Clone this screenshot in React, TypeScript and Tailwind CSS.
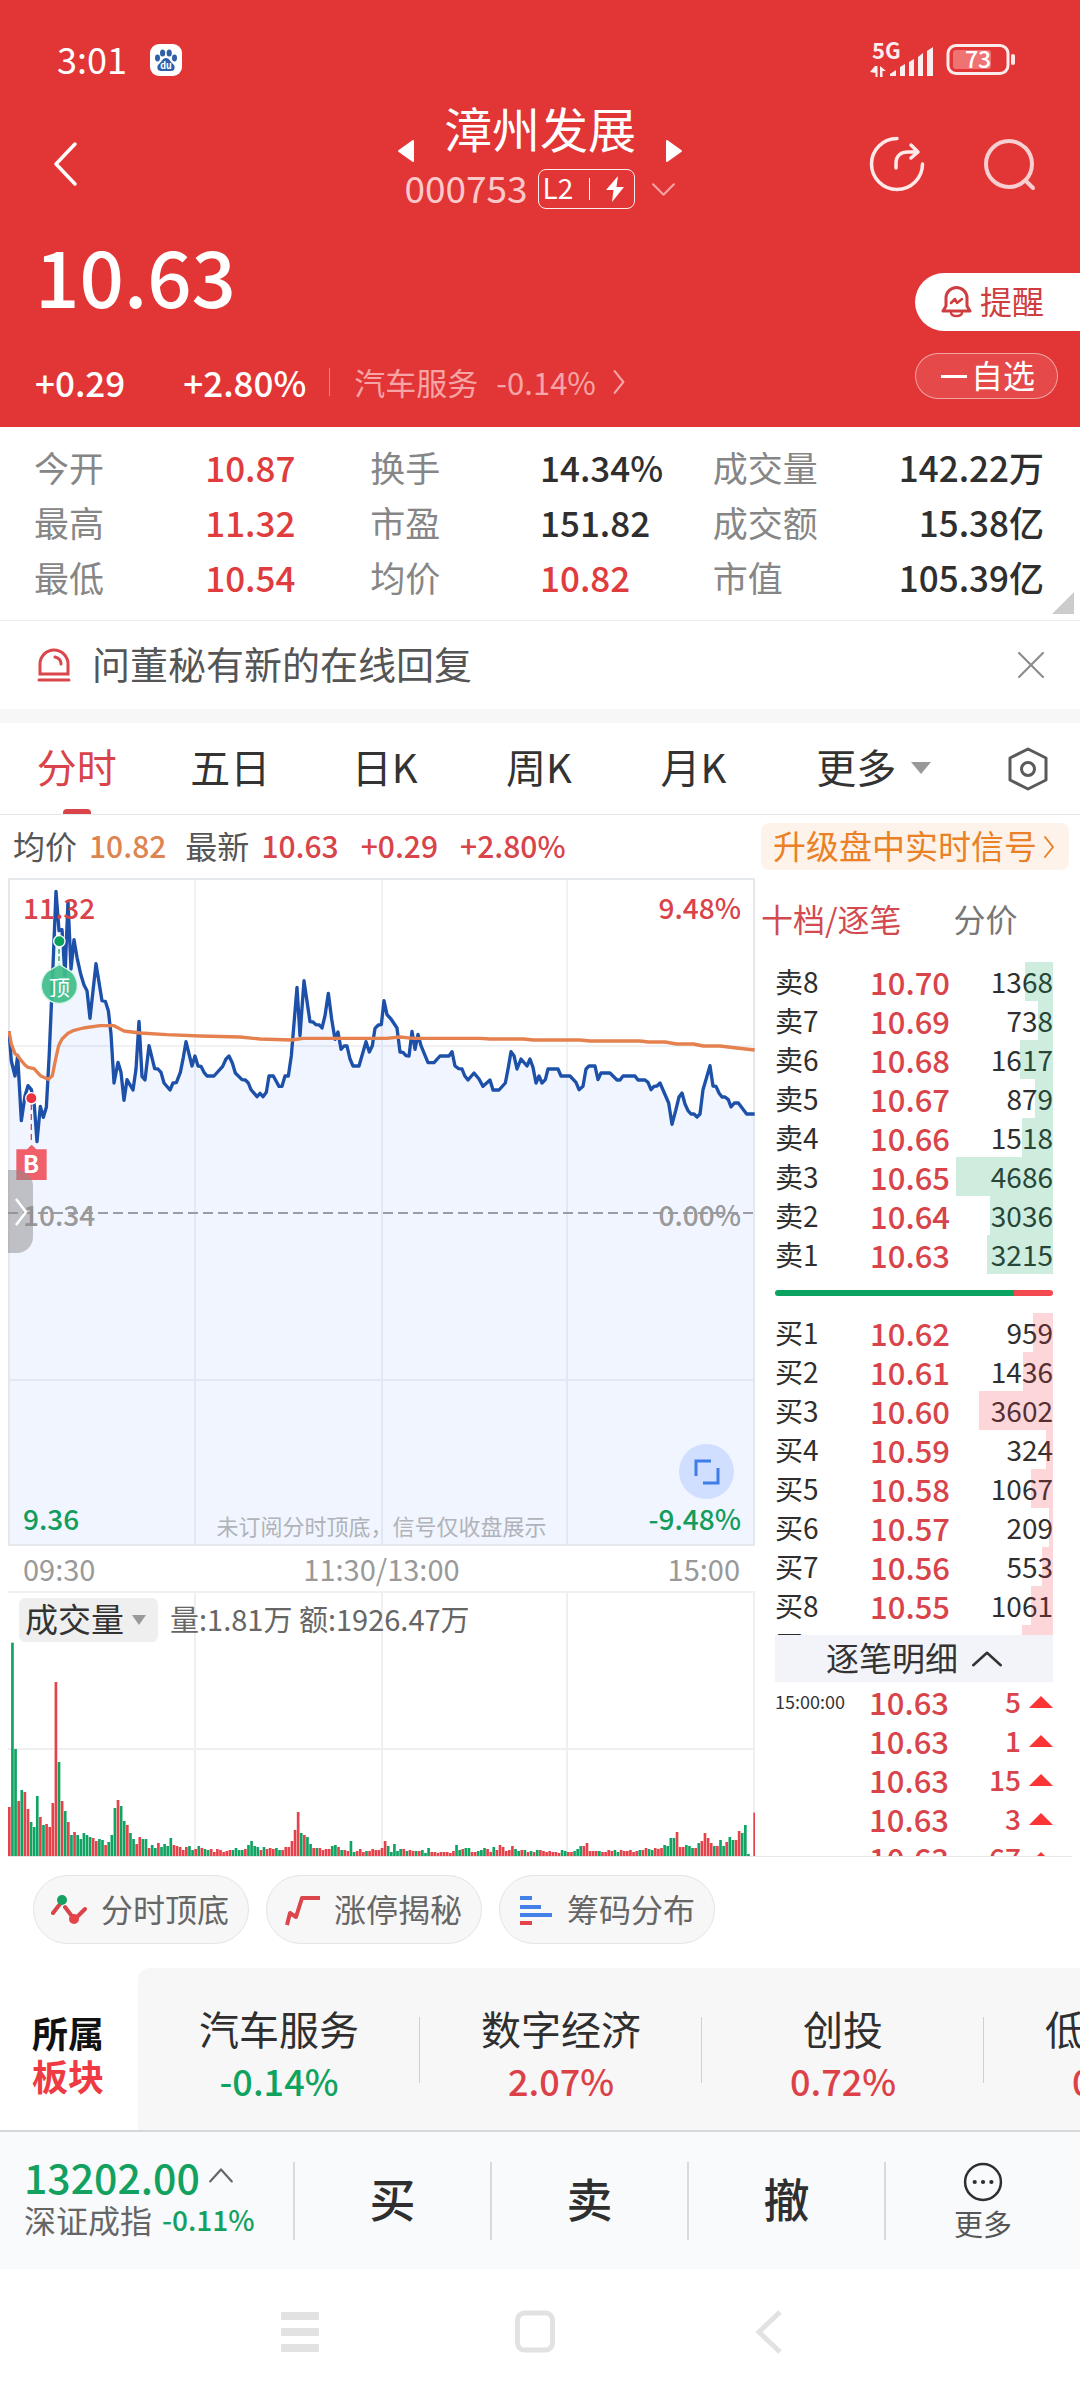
import { useState } from "react";

const stats = [
  ["今开", "10.87", "换手", "14.34%", "成交量", "142.22万"],
  ["最高", "11.32", "市盈", "151.82", "成交额", "15.38亿"],
  ["最低", "10.54", "均价", "10.82", "市值", "105.39亿"],
];

const tabs = ["分时", "五日", "日K", "周K", "月K"];

const sells = [
  { label: "卖8", price: "10.70", qty: 1368 },
  { label: "卖7", price: "10.69", qty: 738 },
  { label: "卖6", price: "10.68", qty: 1617 },
  { label: "卖5", price: "10.67", qty: 879 },
  { label: "卖4", price: "10.66", qty: 1518 },
  { label: "卖3", price: "10.65", qty: 4686 },
  { label: "卖2", price: "10.64", qty: 3036 },
  { label: "卖1", price: "10.63", qty: 3215 },
];

const buys = [
  { label: "买1", price: "10.62", qty: 959 },
  { label: "买2", price: "10.61", qty: 1436 },
  { label: "买3", price: "10.60", qty: 3602 },
  { label: "买4", price: "10.59", qty: 324 },
  { label: "买5", price: "10.58", qty: 1067 },
  { label: "买6", price: "10.57", qty: 209 },
  { label: "买7", price: "10.56", qty: 553 },
  { label: "买8", price: "10.55", qty: 1061 },
  { label: "买9", price: "10.54", qty: 1477 },
];

const ticks = [
  { time: "15:00:00", price: "10.63", qty: 5 },
  { time: "", price: "10.63", qty: 1 },
  { time: "", price: "10.63", qty: 15 },
  { time: "", price: "10.63", qty: 3 },
  { time: "", price: "10.63", qty: 67 },
];

const sectors = [
  { name: "汽车服务", change: "-0.14%" },
  { name: "数字经济", change: "2.07%" },
  { name: "创投", change: "0.72%" },
  { name: "低空经济", change: "0.55%" },
];

const pricePoints =
  "27,517 34,606 45,651 53,590 64,785 75,710 84,680 94,692 103,740 111,848 121,742 130,775 139,745 148,580 157,370 168,97 177,215 186,212 195,350 204,128 213,330 222,242 231,295 242,345 252,378 261,395 270,478 288,314 306,425 316,427 325,455 333,525 342,672 354,610 363,640 372,724 381,662 399,693 408,630 417,487 426,652 435,663 447,560 464,629 474,630 483,640 492,672 510,693 519,672 529,671 541,640 550,595 558,548 576,621 585,591 594,621 603,622 612,640 621,651 642,651 668,622 678,600 687,591 697,612 706,642 726,662 736,663 745,672 753,692 771,713 780,703 789,713 799,700 807,651 820,651 837,682 846,682 855,651 865,651 874,590 891,385 900,530 912,365 930,488 939,489 948,497 958,498 966,507 975,470 985,403 995,480 1005,541 1014,519 1023,571 1032,561 1041,561 1050,600 1059,621 1077,621 1098,548 1108,579 1117,560 1125,508 1135,498 1144,497 1152,425 1161,467 1173,480 1191,507 1200,579 1209,580 1218,590 1227,591 1236,517 1245,571 1254,526 1263,560 1284,611 1302,611 1320,591 1347,591 1356,578 1365,621 1376,629 1386,630 1394,650 1404,663 1422,642 1437,660 1449,682 1470,663 1479,693 1497,693 1516,672 1525,625 1533,578 1542,590 1551,630 1563,600 1581,621 1590,600 1599,625 1608,672 1617,651 1626,672 1636,662 1644,630 1674,630 1683,651 1710,651 1728,670 1737,692 1749,682 1758,630 1767,621 1785,621 1794,662 1803,642 1830,642 1851,663 1860,663 1869,651 1905,651 1914,663 1935,663 1944,670 1953,692 1962,682 1971,681 1980,672 2006,732 2016,796 2027,755 2037,714 2046,702 2055,735 2064,755 2073,765 2082,765 2091,774 2100,765 2109,692 2130,620 2139,681 2148,682 2157,702 2166,714 2175,714 2185,722 2193,744 2203,732 2215,732 2240,765 2264,765";

const averagePoints =
  "27,517 34,555 45,584 53,590 64,605 75,618 84,625 102,629 121,650 145,661 157,650 167,600 176,560 186,540 204,523 222,514 250,507 300,500 342,500 372,516 420,522 500,527 600,531 720,534 780,540 875,543 910,538 1160,538 1200,534 1240,538 1440,538 1470,540 1570,540 1600,543 1740,543 1770,546 1920,546 1945,549 1995,549 2030,555 2080,555 2110,561 2160,561 2210,567 2264,573";

// one entry per minute: r = up, g = down, followed by the bar height
const volumes =
  "r147 g640 g321 r165 g198 r192 r141 g102 g87 g180 r117 g93 r96 r87 r159 r522 g282 r165 g135 r102 g63 r72 g63 g51 g69 g63 g57 r54 r45 g51 g48 r33 g42 g63 g144 r168 g150 g105 r93 g69 g51 r36 r57 g51 g51 r24 g33 g24 r39 g27 g36 g30 g54 r33 r30 r27 r18 r27 g30 g18 r21 g30 r24 g21 g18 r21 r12 r21 r18 r12 r15 r18 g18 g24 g18 g18 r21 g33 g45 g30 g27 r18 g27 r21 r24 r21 g24 g18 r18 r27 r27 r45 r78 r132 g69 r63 g57 g36 r24 g24 r24 r18 r21 r21 g30 g33 r27 g18 r18 r15 g45 g12 r15 r21 r12 g15 r15 r21 r18 r18 r24 r45 g30 g12 g36 g15 g21 r21 g15 r18 r15 g15 r15 g18 g9 g24 r12 r12 r9 r12 r12 r12 r9 r15 g33 g18 r21 g24 g24 r12 r12 g15 g18 g24 r21 r12 g27 r18 r33 r27 r15 r18 r30 g21 g15 r18 g18 r12 g15 r12 g18 r18 r15 r12 r15 r12 r12 r9 g18 g15 r12 r12 g15 g21 g30 r30 r39 r15 r15 r15 g15 r12 r12 r18 r15 g18 g12 r18 r15 r15 r18 r12 r15 g18 r18 r24 g21 g18 r24 r21 r24 g33 g30 g54 g54 r72 r27 r27 g33 g30 g24 r24 g39 r45 r69 r54 r39 g30 r30 g48 g30 r42 g57 g48 r48 r75 g69 g93 g6 g0 r130"
    .split(" ")
    .map((v) => ({ up: v[0] === "r", h: Number(v.slice(1)) }));

function Chevron({ d, className }: { d: string; className: string }) {
  return (
    <svg viewBox="0 0 24 24" className={className} fill="none" stroke="currentColor" strokeWidth="2">
      <path d={d} strokeLinecap="round" strokeLinejoin="round" />
    </svg>
  );
}

function StatusBar() {
  return (
    <div className="flex h-[104px] items-center justify-between pt-9 pb-5 pl-[57px] pr-16">
      <div className="flex items-center gap-[23px]">
        <span className="pb-1 text-[36px] leading-[40px]">3:01</span>
        <svg viewBox="0 0 32 32" className="size-8">
          <rect width="32" height="32" rx="9" fill="#fff" />
          <g fill="#2f5fa8">
            <ellipse cx="7.5" cy="14" rx="2.5" ry="3.4" />
            <ellipse cx="12.6" cy="9" rx="2.6" ry="3.6" />
            <ellipse cx="19.2" cy="9" rx="2.6" ry="3.6" />
            <ellipse cx="24.5" cy="14" rx="2.5" ry="3.4" />
            <path d="M16 14c3 0 4 3 6 5s3 3 2.500 5.500c-.5 2.500-3 2.500-4.500 2.500h-8c-1.500 0-4 0-4.500-2.500C7 22 8 21 10 19s3-5 6-5z" />
          </g>
          <text x="16" y="25" textAnchor="middle" fontSize="9" fontWeight="700" fill="#fff">
            du
          </text>
        </svg>
      </div>
      <div className="flex items-center gap-3">
        <svg viewBox="0 0 64 34" className="h-[34px] w-16 overflow-visible" fill="#fff" fillOpacity=".92">
          <text x="2" y="16" fontSize="22" fontWeight="700">
            5G
          </text>
          <path d="M5 23h2.500v11H5.500v-4L0 29zM10 23l6 5h-3.500v6H10z" />
          <path d="M20 31l6-4v6h-6zM30 24l5-3v12h-5zM39 19l5-3v17h-5zM48 14l5-4v23h-5zM57 8l6-4v29h-6z" />
        </svg>
        <svg viewBox="0 0 70 32" className="h-8 w-[70px] overflow-visible">
          <rect x="2" y="1.500" width="60" height="28" rx="8" fill="none" stroke="#fff" strokeOpacity=".9" strokeWidth="3" />
          <rect x="7" y="6" width="38" height="19" rx="3" fill="#f07374" />
          <rect x="65" y="10" width="4" height="11" rx="2" fill="#fff" fillOpacity=".9" />
          <text x="32" y="24" textAnchor="middle" fontSize="23" fontWeight="500" fill="#fff">
            73
          </text>
        </svg>
      </div>
    </div>
  );
}

function Header() {
  return (
    <header className="bg-[#e23536] text-white">
      <StatusBar />
      <div className="grid h-[120px] grid-cols-[1fr_auto_1fr] items-center">
        <button aria-label="返回" className="ml-[50px] w-8">
          <svg viewBox="0 0 32 46" className="h-[46px] w-8" fill="none" stroke="currentColor" strokeWidth="3.500">
            <path d="M25 3L6 23l19 20" strokeLinecap="round" strokeLinejoin="round" />
          </svg>
        </button>
        <div className="flex flex-col items-center self-start">
          <div className="flex h-[58px] items-end gap-[30px]">
            <button aria-label="上一只">
              <svg viewBox="0 0 16 22" className="h-[22px] w-4" fill="currentColor" stroke="currentColor" strokeWidth="2" strokeLinejoin="round">
                <path d="M15 1v20L1 11z" />
              </svg>
            </button>
            <h1 className="pb-2 text-[48px] leading-[54px]">漳州发展</h1>
            <button aria-label="下一只">
              <svg viewBox="0 0 16 22" className="h-[22px] w-4" fill="currentColor" stroke="currentColor" strokeWidth="2" strokeLinejoin="round">
                <path d="M1 1v20l14-10z" />
              </svg>
            </button>
          </div>
          <div className="mt-[7px] flex h-10 items-center">
            <span className="mb-1 text-[37px] leading-[40px] text-[#fcc9ca]">000753</span>
            <span className="ml-[10px] flex h-10 w-[97px] items-center rounded-lg border border-white/90 pl-1">
              <span className="mb-1 text-[28px] leading-[36px]">L2</span>
              <span className="ml-4 h-[22px] w-px bg-white" />
              <svg viewBox="0 0 18 26" className="ml-4 h-[26px] w-[18px]" fill="currentColor">
                <path d="M12 0L0 14h7.500L6 26l12-15h-7.500z" />
              </svg>
            </span>
            <Chevron d="M2 7l10 10L22 7" className="ml-4 size-[25px] text-[#f7a3a4]" />
          </div>
        </div>
        <div className="flex justify-end gap-[58px] pr-[43px]">
          <button aria-label="分享">
            <svg viewBox="0 0 56 56" className="size-14" fill="none" stroke="#ffeaea" strokeWidth="3.500" strokeLinecap="round" strokeLinejoin="round">
              <path d="M28 2.500A25.500 25.500 0 1 0 53.500 28" />
              <path d="M27 32v-5c0-7 5-11 12-11h9M42 9l7 7-7 6" />
            </svg>
          </button>
          <button aria-label="搜索">
            <svg viewBox="0 0 54 56" className="h-14 w-[54px]" fill="none" stroke="#f7cfd0" strokeWidth="4" strokeLinecap="round">
              <circle cx="26" cy="28" r="23" />
              <path d="M43 45l7 7" />
            </svg>
          </button>
        </div>
      </div>
      <div className="flex h-[203px] justify-between">
        <div className="pt-2 pl-[35px]">
          <div className="text-[78px] leading-[84px] font-medium">10.63</div>
          <div className="mt-[46px] flex items-center text-[35px] leading-[40px] font-medium">
            <span>+0.29</span>
            <span className="ml-[58px]">+2.80%</span>
            <span className="ml-[23px] h-7 w-px bg-white/40" />
            <a href="#sector" className="ml-6 flex items-center text-[31px] font-normal text-[#f6a4a5]">
              汽车服务
              <span className="ml-[18px]">-0.14%</span>
              <Chevron d="M8 2l8 10-8 10" className="ml-[10px] size-[26px]" />
            </a>
          </div>
        </div>
        <div className="flex flex-col items-end pt-[49px]">
          <button className="flex h-[58px] w-[165px] items-center rounded-l-full bg-white pl-[26px] text-[32px] text-[#cf3d41]">
            <svg viewBox="0 0 31 32" className="mr-2 h-8 w-[31px]" fill="none" stroke="currentColor" strokeWidth="3" strokeLinejoin="round" strokeLinecap="round">
              <path d="M2 25h27l-3-5v-8a10.500 10.500 0 0 0-21 0v8z" />
              <path d="M10 27c1 4 10 4 11 0M10 17l4-4 2 4 5-4" strokeWidth="2.500" />
            </svg>
            <span className="pb-1 leading-[36px]">提醒</span>
          </button>
          <button className="mt-[22px] mr-[22px] flex h-[46px] w-[143px] items-center rounded-full border border-white/50 bg-white/10 pl-[25px] text-[32px]">
            <span className="mr-1 h-[3px] w-[26px] bg-white" />
            <span className="pb-1 leading-[36px]">自选</span>
          </button>
        </div>
      </div>
    </header>
  );
}

function Stats() {
  return (
    <section className="relative border-b border-[#ebebeb] pt-3 pb-4">
      <table className="w-full table-fixed text-[35px] leading-[55px]">
        <colgroup>
          <col className="w-[19%]" />
          <col className="w-[15%]" />
          <col className="w-[16%]" />
          <col className="w-[16%]" />
          <col className="w-[15%]" />
          <col />
        </colgroup>
        <tbody>
          {stats.map((row) => (
            <tr key={row[0]}>
              <th className="pl-[34px] text-left font-normal text-[#868686]">{row[0]}</th>
              <td className="font-medium text-[#e03c3e]">{row[1]}</td>
              <th className="pl-[3px] text-left font-normal text-[#868686]">{row[2]}</th>
              <td className={row[2] === "均价" ? "font-medium text-[#e03c3e]" : "font-medium text-[#2f2f2f]"}>{row[3]}</td>
              <th className="text-left font-normal whitespace-nowrap text-[#868686]">{row[4]}</th>
              <td className="pr-9 text-right font-medium whitespace-nowrap text-[#2f2f2f]">{row[5]}</td>
            </tr>
          ))}
        </tbody>
      </table>
      <svg viewBox="0 0 22 22" className="absolute right-[6px] bottom-[6px] size-[22px]" fill="#cccccc">
        <path d="M22 0v22H0z" />
      </svg>
    </section>
  );
}

function Notice() {
  return (
    <section className="flex h-[102px] items-center border-b-[14px] border-[#f7f7f7] pr-9 pl-9">
      <svg viewBox="0 0 36 36" className="size-9" fill="none" stroke="#d9474d" strokeWidth="3" strokeLinecap="round">
        <path d="M4 27V17a14 14 0 0 1 28 0v10zM3 33h30M19 10c4 1 6 3 6 7" />
      </svg>
      <a href="#notice" className="ml-5 pb-1 text-[38px] leading-[44px] text-[#555555]">
        问董秘有新的在线回复
      </a>
      <button aria-label="关闭" className="ml-auto text-[#8c8c8c]">
        <Chevron d="M1 1l22 22M23 1L1 23" className="size-[26px]" />
      </button>
    </section>
  );
}

function Tabs() {
  const [active, setActive] = useState("分时");
  return (
    <nav className="grid h-[92px] grid-cols-[154fr_154fr_156fr_154fr_156fr_206fr_104fr] border-b border-[#e8e8e8] text-[40px] text-[#333333]">
      {tabs.map((tab) => (
        <button
          key={tab}
          onClick={() => setActive(tab)}
          className={active === tab ? "flex flex-col items-center justify-between text-[#d9434a]" : "flex flex-col items-center justify-between"}
        >
          <span className="leading-[86px]">{tab}</span>
          {active === tab && <span className="h-[5px] w-7 rounded-t bg-[#d9434a]" />}
        </button>
      ))}
      <button className="flex items-center justify-center gap-[15px] pb-[5px]">
        <span className="leading-[86px]">更多</span>
        <svg viewBox="0 0 20 12" className="mt-1 h-3 w-5" fill="#999999">
          <path d="M0 0h20L10 12z" />
        </svg>
      </button>
      <button aria-label="设置" className="flex items-center justify-center">
        <svg viewBox="0 0 42 44" className="h-11 w-[42px]" fill="none" stroke="#5a5a5a" strokeWidth="3" strokeLinejoin="round">
          <path d="M21 2l18 9v22l-18 9-18-9V11z" />
          <circle cx="21" cy="22" r="6.500" />
        </svg>
      </button>
    </nav>
  );
}

function InfoRow() {
  return (
    <div className="flex h-[63px] items-center pr-[11px] pl-[13px] text-[30px] leading-[36px] text-[#d9434a]">
      <span className="pb-1 text-[32px] text-[#555555]">均价</span>
      <span className="ml-3 pb-1 font-medium text-[#dd8450]">10.82</span>
      <span className="ml-[19px] pb-1 text-[32px] text-[#555555]">最新</span>
      <span className="ml-3 pb-1 font-medium">10.63</span>
      <span className="ml-[22px] pb-1 font-medium">+0.29</span>
      <span className="ml-[22px] pb-1 font-medium">+2.80%</span>
      <button className="ml-auto flex h-[47px] items-center rounded-lg bg-[#fef3ea] pr-2 pl-3 text-[33px] text-[#ea8126]">
        <span className="pb-1">升级盘中实时信号</span>
        <Chevron d="M8 2l8 10-8 10" className="size-[24px]" />
      </button>
    </div>
  );
}

function PriceChart() {
  return (
    <div className="relative h-[668px] text-[28px] leading-[32px] font-medium">
      <svg viewBox="24 57 2241 2004" preserveAspectRatio="none" className="h-full w-full" fill="none">
        <polygon points={pricePoints + " 2264,2061 24,2061"} fill="#f0f5ff" />
        <path d="M585 57V2061M1146 57V2061M1701 57V2061M24 561H2265M24 1563H2265" stroke="#1e3250" strokeOpacity=".07" strokeWidth="6" />
        <rect x="27" y="60" width="2235" height="1998" stroke="#e4e7ec" strokeWidth="6" />
        <path d="M24 1062H2265" stroke="#9a9da3" strokeWidth="6" strokeDasharray="30 15" />
        <polyline points={pricePoints} stroke="#1d50a8" strokeWidth="10" strokeLinejoin="round" />
        <polyline points={averagePoints} stroke="#e5804f" strokeWidth="10" strokeLinejoin="round" />
        <path d="M94 735V850" stroke="#d9434a" strokeWidth="4" strokeDasharray="18 12" />
        <circle cx="94" cy="718" r="17" fill="#ee3340" stroke="#fff" strokeWidth="4" />
        <path d="M49 871h32l14-14 14 14h31v92H49z" fill="#f0606a" />
        <path d="M177 262V320" stroke="#e9fff4" strokeWidth="14" />
        <path d="M177 270V320" stroke="#2f8f6b" strokeWidth="4" strokeDasharray="14 8" />
        <circle cx="178" cy="247" r="17" fill="#0ba25f" stroke="#fff" strokeWidth="4" />
        <path d="M178 316l22 14a54 54 0 1 1-44 0z" fill="#3fbd8b" fillOpacity=".93" stroke="#d5f5e6" strokeWidth="4" />
      </svg>
      <span className="absolute top-[92px] left-[41px] w-[21px] text-center text-[21px] font-normal text-white">顶</span>
      <span className="absolute top-[269px] left-[13px] w-5 text-center text-[24px] font-bold text-white">B</span>
      <span className="absolute top-[13px] left-[15px] text-[#d9434a]">11.32</span>
      <span className="absolute top-[13px] right-[14px] text-[#d9434a]">9.48%</span>
      <span className="absolute top-[320px] left-[15px] text-[#999999]">10.34</span>
      <span className="absolute top-[320px] right-[14px] text-[#999999]">0.00%</span>
      <span className="absolute top-[624px] left-[15px] text-[#139d5c]">9.36</span>
      <span className="absolute top-[624px] right-[14px] text-[#139d5c]">-9.48%</span>
      <span className="absolute inset-x-0 top-[631px] text-center text-[22px] font-normal text-[#b0b3b8]">未订阅分时顶底，信号仅收盘展示</span>
      <button aria-label="展开" className="absolute top-[292px] left-0 flex h-[83px] w-[25px] items-center justify-center rounded-r-2xl bg-[#8c8c8c]/50 text-white">
        <svg viewBox="0 0 14 28" className="h-7 w-[14px]" fill="none" stroke="currentColor" strokeWidth="2.500">
          <path d="M2 1l10 13L2 27" />
        </svg>
      </button>
      <button aria-label="全屏" className="absolute right-[21px] bottom-[47px] flex size-[55px] items-center justify-center rounded-full bg-[#d0dfff]">
        <svg viewBox="0 0 26 26" className="size-[26px]" fill="none" stroke="#3f7ee6" strokeWidth="3">
          <path d="M2 17V2h15M24 9v15H9" />
        </svg>
      </button>
    </div>
  );
}

function VolumeChart() {
  const step = 2236 / (volumes.length - 1);
  return (
    <div className="relative h-[265px] border-t-2 border-[#f0f0f0]">
      <svg viewBox="24 -21 2241 789" preserveAspectRatio="none" className="h-full w-full">
        <path d="M585 -21V768M1146 -21V768M1701 -21V768M24 447H2265M2262 -21V768" stroke="#efefef" strokeWidth="6" />
        {volumes.map((v, i) => (
          <rect key={i} x={24 + i * step} y={768 - v.h} width="8" height={v.h} fill={v.up ? "#e4434b" : "#10a362"} />
        ))}
      </svg>
      <div className="absolute top-[5px] left-[11px] flex items-center">
        <button className="flex h-[44px] items-center rounded-md bg-[#efefef] pr-3 pl-[6px] text-[33px] leading-[36px] text-[#333333]">
          <span className="pb-1">成交量</span>
          <svg viewBox="0 0 14 10" className="ml-2 h-[10px] w-[14px]" fill="#999999">
            <path d="M0 0h14L7 10z" />
          </svg>
        </button>
        <span className="ml-3 pb-1 text-[29px] leading-[36px] text-[#666666]">量:1.81万 额:1926.47万</span>
      </div>
    </div>
  );
}

function BookTable({ rows, side }: { rows: typeof sells; side: "sell" | "buy" }) {
  return (
    <table className="w-full table-fixed text-[28px] leading-[37px] text-[#2f2f2f]">
      <colgroup>
        <col className="w-[66px]" />
        <col className="w-[109px]" />
        <col />
      </colgroup>
      <tbody>
        {rows.map((row) => (
          <tr key={row.label} className="h-[39px]">
            <th className="p-0 text-left font-normal">{row.label}</th>
            <td className="p-0 text-right text-[31px] font-medium text-[#d9434a]">{row.price}</td>
            <td className="relative p-0 text-right">
              {row.qty}
              <span
                className={side === "sell" ? "absolute inset-y-0 right-0 bg-[#0ba360]/20" : "absolute inset-y-0 right-0 bg-[#ee3340]/20"}
                style={{ width: `${(row.qty / 4686) * 94}%` }}
              />
            </td>
          </tr>
        ))}
      </tbody>
    </table>
  );
}

function OrderBook() {
  return (
    <aside className="w-[317px] pr-[19px] pl-5">
      <div className="flex h-[84px] items-center text-[32px]">
        <button className="-ml-[14px] pb-1 whitespace-nowrap text-[#d24a4f]">十档/逐笔</button>
        <button className="ml-[52px] pb-1 whitespace-nowrap text-[#777777]">分价</button>
      </div>
      <BookTable rows={sells} side="sell" />
      <div className="mt-4 mb-[17px] flex h-[6px] overflow-hidden rounded-full">
        <span className="w-[86%] bg-[#0ba360]" />
        <span className="flex-1 bg-[#f24a4f]" />
      </div>
      <div className="h-[322px] overflow-hidden">
        <BookTable rows={buys} side="buy" />
      </div>
      <button className="flex h-[47px] w-full items-center justify-center bg-[#f3f4f9] text-[33px] leading-[36px] text-[#333333]">
        <span className="pb-1">逐笔明细</span>
        <Chevron d="M1 17L12 7l11 10" className="ml-[14px] size-[30px]" />
      </button>
      <div className="h-[174px] overflow-hidden">
        <table className="w-full table-fixed text-[28px] leading-[37px] text-[#d9434a]">
          <colgroup>
            <col className="w-[74px]" />
            <col className="w-[100px]" />
            <col />
          </colgroup>
          <tbody>
            {ticks.map((tick, i) => (
              <tr key={i} className="h-[39px]">
                <td className="p-0 text-[18px] text-[#333333]">{tick.time}</td>
                <td className="p-0 text-right text-[31px] font-medium">{tick.price}</td>
                <td className="p-0">
                  <div className="flex items-center justify-end gap-2">
                    <span className="font-medium">{tick.qty}</span>
                    <svg viewBox="0 0 24 12" className="h-3 w-6" fill="#fb3434">
                      <path d="M12 0l12 12H0z" />
                    </svg>
                  </div>
                </td>
              </tr>
            ))}
          </tbody>
        </table>
      </div>
    </aside>
  );
}

function Tools() {
  const pill = "flex h-[69px] items-center gap-[14px] rounded-full border border-[#e4e4e4] bg-[#f7f7f7] pr-[19px] pl-[17px] text-[32px] text-[#666666]";
  return (
    <div className="flex gap-[17px] pt-[18px] pb-[24px] pl-[33px]">
      <button className={pill}>
        <svg viewBox="0 0 36 34" className="h-[34px] w-9" fill="none" strokeWidth="3" strokeLinecap="round">
          <path d="M2 20L9 11M14 14l6 8M27 23l7-7" stroke="#d9434a" strokeWidth="4" />
          <circle cx="11" cy="7" r="5" fill="#15a062" />
          <circle cx="23" cy="26" r="5" fill="#e4434b" />
        </svg>
        <span className="pb-1 leading-[36px]">分时顶底</span>
      </button>
      <button className={pill}>
        <svg viewBox="0 0 36 34" className="h-[34px] w-9" fill="none" stroke="#dc454b" strokeWidth="4">
          <path d="M3 32l3-12 6 4 6-19h18" strokeLinejoin="round" />
        </svg>
        <span className="pb-1 leading-[36px]">涨停揭秘</span>
      </button>
      <button className={pill}>
        <svg viewBox="0 0 36 34" className="h-[34px] w-9" fill="#4380e8">
          <rect x="3" y="3" width="12" height="4" />
          <rect x="3" y="12" width="21" height="4" />
          <rect x="3" y="20" width="32" height="4" />
          <rect x="3" y="28" width="12" height="4" fill="#e4434b" />
        </svg>
        <span className="pb-1 leading-[36px]">筹码分布</span>
      </button>
    </div>
  );
}

function Sectors() {
  return (
    <section id="sector" className="flex h-[162px]">
      <h2 className="w-[138px] pt-[43px] pl-8 text-[36px] leading-[43px] font-bold text-[#111111]">
        所属
        <span className="block text-[#ee3b43]">板块</span>
      </h2>
      <div className="flex flex-1 items-center overflow-hidden rounded-tl-xl bg-[#f7f7f7] pt-2">
        {sectors.map((s) => (
          <a
            key={s.name}
            href="#sector"
            className="relative w-[282px] shrink-0 text-center after:absolute after:top-4 after:right-0 after:h-[66px] after:w-px after:bg-[#d0d0d0]"
          >
            <span className="block text-[40px] leading-[54px] text-[#2f2f2f]">{s.name}</span>
            <span className={s.change.startsWith("-") ? "block text-[36px] leading-[50px] font-medium text-[#0fa35f]" : "block text-[36px] leading-[50px] font-medium text-[#dd4148]"}>
              {s.change}
            </span>
          </a>
        ))}
      </div>
    </section>
  );
}

function TradeBar() {
  return (
    <footer className="grid h-[139px] grid-cols-[293fr_197fr_197fr_197fr_196fr] items-center border-t-2 border-[#d5d7db] bg-[#f9fafc]">
      <button className="pb-2 pl-6 text-left">
        <span className="flex items-center text-[41px] leading-[44px] font-medium text-[#12a15f]">
          13202.00
          <Chevron d="M2 17L12 6l10 11" className="ml-2 size-[26px] text-[#666666]" />
        </span>
        <span className="flex items-center text-[32px] leading-[42px] whitespace-nowrap text-[#666666]">
          深证成指
          <span className="ml-[10px] text-[28px] font-medium text-[#12a15f]">-0.11%</span>
        </span>
      </button>
      {["买", "卖", "撤"].map((label) => (
        <button key={label} className="h-[78px] border-l-2 border-[#d9dadd] pb-2 text-[46px] leading-[70px] font-medium text-[#2f2f2f]">
          {label}
        </button>
      ))}
      <button className="flex h-[78px] flex-col items-center justify-center border-l-2 border-[#d9dadd] text-[29px] leading-[34px] text-[#555555]">
        <svg viewBox="0 0 48 48" className="mb-1 size-12" fill="none" stroke="#2f2f2f" strokeWidth="3">
          <circle cx="24" cy="24" r="21.500" />
          <path d="M14 24h.1M24 24h.1M34 24h.1" strokeWidth="5" strokeLinecap="round" />
        </svg>
        更多
      </button>
    </footer>
  );
}

function SystemNav() {
  return (
    <nav className="flex h-[130px] items-center justify-center gap-[195px] pr-[10px] pb-1">
      <button aria-label="最近任务">
        <svg viewBox="0 0 40 44" className="h-11 w-10" fill="#e2e2e2">
          <path d="M1 2h38v8H1zM1 18h38v8H1zM1 34h38v8H1z" />
        </svg>
      </button>
      <button aria-label="主屏幕">
        <svg viewBox="0 0 40 44" className="h-11 w-10" fill="none" stroke="#e2e2e2" strokeWidth="5">
          <rect x="2.500" y="3" width="35" height="37" rx="7" />
        </svg>
      </button>
      <button aria-label="后退">
        <svg viewBox="0 0 40 44" className="h-11 w-10" fill="none" stroke="#e2e2e2" strokeWidth="5">
          <path d="M30 2L9 22l21 20" />
        </svg>
      </button>
    </nav>
  );
}

export default function App() {
  return (
    <div className="w-full overflow-hidden bg-white font-['Noto_Sans_CJK_SC',sans-serif]">
      <Header />
      <Stats />
      <Notice />
      <Tabs />
      <InfoRow />
      <main className="ml-2 mr-2 flex border-b border-[#e8e8e8]">
        <div className="min-w-0 flex-1">
          <PriceChart />
          <div className="grid h-[45px] grid-cols-3 px-[15px] text-[29px] leading-[44px] text-[#999999]">
            <span>09:30</span>
            <span className="text-center">11:30/13:00</span>
            <span className="text-right">15:00</span>
          </div>
          <VolumeChart />
        </div>
        <OrderBook />
      </main>
      <Tools />
      <Sectors />
      <TradeBar />
      <SystemNav />
    </div>
  );
}
